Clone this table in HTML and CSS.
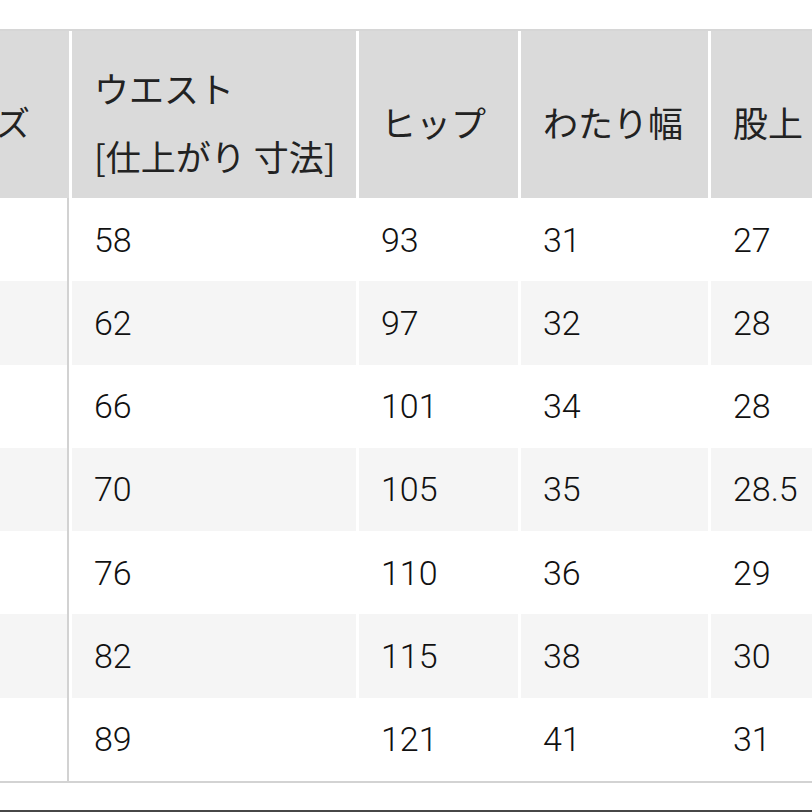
FILE: index.html
```html
<!DOCTYPE html>
<html lang="ja">
<head>
<meta charset="utf-8">
<title>サイズ表</title>
<link rel="stylesheet" href="styles.css">
</head>
<body>
<div class="viewport">
  <div class="size-table">
    <div class="cell head first">サイズ</div>
    <div class="cell head"><span class="head-text">ウエスト<br>[仕上がり 寸法]</span></div>
    <div class="cell head">ヒップ</div>
    <div class="cell head">わたり幅</div>
    <div class="cell head">股上</div>

    <div class="cell first">XS</div><div class="cell num">58</div><div class="cell num">93</div><div class="cell num">31</div><div class="cell num">27</div>
    <div class="cell first alt">S</div><div class="cell num alt">62</div><div class="cell num alt">97</div><div class="cell num alt">32</div><div class="cell num alt">28</div>
    <div class="cell first">M</div><div class="cell num">66</div><div class="cell num">101</div><div class="cell num">34</div><div class="cell num">28</div>
    <div class="cell first alt">L</div><div class="cell num alt">70</div><div class="cell num alt">105</div><div class="cell num alt">35</div><div class="cell num alt">28.5</div>
    <div class="cell first">XL</div><div class="cell num">76</div><div class="cell num">110</div><div class="cell num">36</div><div class="cell num">29</div>
    <div class="cell first alt">XXL</div><div class="cell num alt">82</div><div class="cell num alt">115</div><div class="cell num alt">38</div><div class="cell num alt">30</div>
    <div class="cell first">3XL</div><div class="cell num">89</div><div class="cell num">121</div><div class="cell num">41</div><div class="cell num">31</div>
  </div>
  <div class="footer-line"></div>
</div>
</body>
</html>
```

FILE: styles.css
```css
html, body {
  margin: 0;
  padding: 0;
  background: #ffffff;
}

body {
  width: 812px;
  height: 812px;
  overflow: hidden;
  font-family: "Noto Sans CJK JP", "Noto Sans", sans-serif;
  color: #1e1e1e;
}

.viewport {
  width: 812px;
  overflow: hidden;
  padding-top: 29px;
}

.size-table {
  display: grid;
  grid-template-columns: 162px 284px 159px 187px 200px;
  grid-template-rows: 167px repeat(7, 83.286px);
  column-gap: 3px;
  width: max-content;
  margin-left: -93px;
  border-top: 2px solid #d6d6d6;
  border-bottom: 2px solid #d3d3d3;
  background: #ffffff;
}

.cell {
  box-sizing: border-box;
  display: flex;
  align-items: center;
  padding-left: 22px;
  background: #ffffff;
  white-space: nowrap;
}

.cell.head {
  background: #dadada;
  font-size: 35px;
  line-height: 68px;
  padding-top: 14px;
  font-weight: 400;
  color: #222222;
}

.cell.first {
  border-right: 2px solid #d2d2d2;
  font-family: "Roboto", "Liberation Sans", sans-serif;
  font-size: 34px;
}

.cell.head.first {
  border-right: none;
  font-family: "Noto Sans CJK JP", sans-serif;
}

.cell.alt {
  background: #f5f5f5;
}

.cell.num {
  font-family: "Roboto", "Liberation Sans", sans-serif;
  font-size: 34px;
  font-weight: 300;
  color: #111111;
}

.footer-line {
  margin-top: 27px;
  height: 2px;
  background: #474747;
}
```
